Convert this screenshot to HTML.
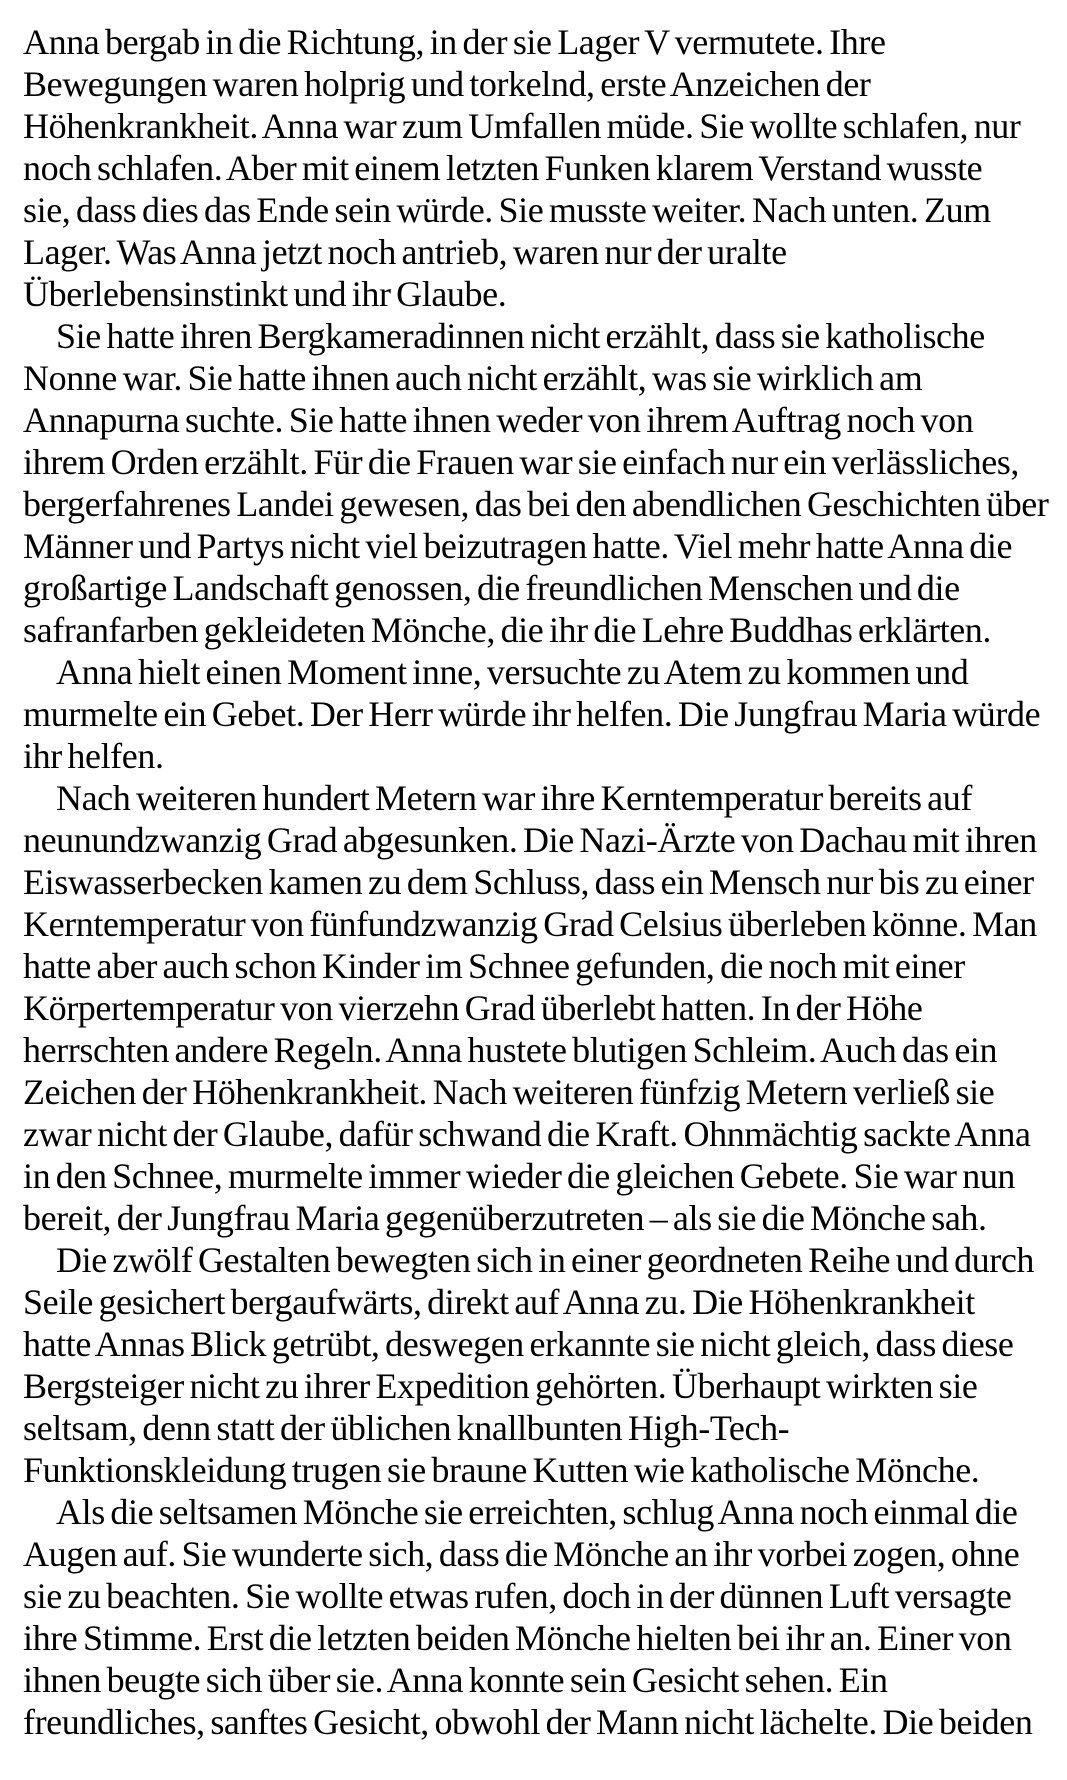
<!DOCTYPE html>
<html><head><meta charset="utf-8"><style>
html,body{margin:0;padding:0;background:#fff;}
body{width:1067px;height:1780px;overflow:hidden;}
.t{padding-top:21px;padding-left:23px;font-family:"Liberation Serif",serif;font-size:36px;line-height:42px;color:#000;letter-spacing:-0.4px;word-spacing:-3px;}
.t div{white-space:nowrap;}
.i{padding-left:33px;}
</style></head><body><div class="t">
<div>Anna bergab in die Richtung, in der sie Lager V vermutete. Ihre</div>
<div>Bewegungen waren holprig und torkelnd, erste Anzeichen der</div>
<div>Höhenkrankheit. Anna war zum Umfallen müde. Sie wollte schlafen, nur</div>
<div>noch schlafen. Aber mit einem letzten Funken klarem Verstand wusste</div>
<div>sie, dass dies das Ende sein würde. Sie musste weiter. Nach unten. Zum</div>
<div>Lager. Was Anna jetzt noch antrieb, waren nur der uralte</div>
<div>Überlebensinstinkt und ihr Glaube.</div>
<div class="i">Sie hatte ihren Bergkameradinnen nicht erzählt, dass sie katholische</div>
<div>Nonne war. Sie hatte ihnen auch nicht erzählt, was sie wirklich am</div>
<div>Annapurna suchte. Sie hatte ihnen weder von ihrem Auftrag noch von</div>
<div>ihrem Orden erzählt. Für die Frauen war sie einfach nur ein verlässliches,</div>
<div>bergerfahrenes Landei gewesen, das bei den abendlichen Geschichten über</div>
<div>Männer und Partys nicht viel beizutragen hatte. Viel mehr hatte Anna die</div>
<div>großartige Landschaft genossen, die freundlichen Menschen und die</div>
<div>safranfarben gekleideten Mönche, die ihr die Lehre Buddhas erklärten.</div>
<div class="i">Anna hielt einen Moment inne, versuchte zu Atem zu kommen und</div>
<div>murmelte ein Gebet. Der Herr würde ihr helfen. Die Jungfrau Maria würde</div>
<div>ihr helfen.</div>
<div class="i">Nach weiteren hundert Metern war ihre Kerntemperatur bereits auf</div>
<div>neunundzwanzig Grad abgesunken. Die Nazi-Ärzte von Dachau mit ihren</div>
<div>Eiswasserbecken kamen zu dem Schluss, dass ein Mensch nur bis zu einer</div>
<div>Kerntemperatur von fünfundzwanzig Grad Celsius überleben könne. Man</div>
<div>hatte aber auch schon Kinder im Schnee gefunden, die noch mit einer</div>
<div>Körpertemperatur von vierzehn Grad überlebt hatten. In der Höhe</div>
<div>herrschten andere Regeln. Anna hustete blutigen Schleim. Auch das ein</div>
<div>Zeichen der Höhenkrankheit. Nach weiteren fünfzig Metern verließ sie</div>
<div>zwar nicht der Glaube, dafür schwand die Kraft. Ohnmächtig sackte Anna</div>
<div>in den Schnee, murmelte immer wieder die gleichen Gebete. Sie war nun</div>
<div>bereit, der Jungfrau Maria gegenüberzutreten – als sie die Mönche sah.</div>
<div class="i">Die zwölf Gestalten bewegten sich in einer geordneten Reihe und durch</div>
<div>Seile gesichert bergaufwärts, direkt auf Anna zu. Die Höhenkrankheit</div>
<div>hatte Annas Blick getrübt, deswegen erkannte sie nicht gleich, dass diese</div>
<div>Bergsteiger nicht zu ihrer Expedition gehörten. Überhaupt wirkten sie</div>
<div>seltsam, denn statt der üblichen knallbunten High-Tech-</div>
<div>Funktionskleidung trugen sie braune Kutten wie katholische Mönche.</div>
<div class="i">Als die seltsamen Mönche sie erreichten, schlug Anna noch einmal die</div>
<div>Augen auf. Sie wunderte sich, dass die Mönche an ihr vorbei zogen, ohne</div>
<div>sie zu beachten. Sie wollte etwas rufen, doch in der dünnen Luft versagte</div>
<div>ihre Stimme. Erst die letzten beiden Mönche hielten bei ihr an. Einer von</div>
<div>ihnen beugte sich über sie. Anna konnte sein Gesicht sehen. Ein</div>
<div>freundliches, sanftes Gesicht, obwohl der Mann nicht lächelte. Die beiden</div>
</div></body></html>
